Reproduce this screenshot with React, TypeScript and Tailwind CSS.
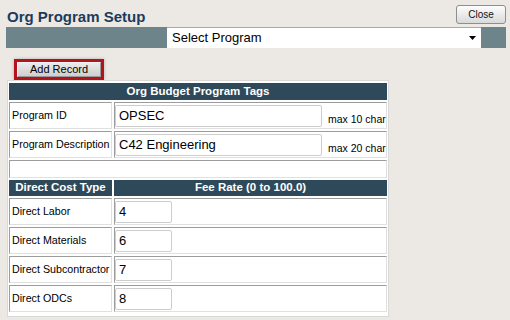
import React from 'react'

const inset =
  'border border-t-[#9c9c9c] border-l-[#9c9c9c] border-r-[#e0e0e0] border-b-[#e0e0e0]'

interface FieldProps {
  label: string
  value: string
  wide?: boolean
  hint?: string
}

function FieldRow({ label, value, wide, hint }: FieldProps) {
  return (
    <div className="flex h-[27px] gap-[2px]">
      <div className={`${inset} flex w-[103px] shrink-0 items-center whitespace-nowrap pl-[2px] text-[10.7px] text-black`}>
        {label}
      </div>
      <div className={`${inset} flex flex-1 items-center`}>
        <input
          readOnly
          value={value}
          className={`${wide ? 'w-[207px]' : 'w-[57px]'} h-[22px] rounded-[2px] border border-[#cdcdcd] bg-white px-[3px] text-[13px] text-black outline-none`}
        />
        {hint && <span className="ml-[6px] mt-[8px] whitespace-nowrap text-[10.5px] text-black">{hint}</span>}
      </div>
    </div>
  )
}

const costs = [
  { label: 'Direct Labor', value: '4' },
  { label: 'Direct Materials', value: '6' },
  { label: 'Direct Subcontractor', value: '7' },
  { label: 'Direct ODCs', value: '8' },
]

export default function App() {
  return (
    <div
      className="h-[320px] w-[510px] overflow-hidden bg-[#ece9e4]"
      style={{ fontFamily: '"Liberation Sans", Arial, sans-serif' }}
    >
      {/* title row */}
      <div className="flex h-[27px] items-start justify-between pl-[7px] pr-[4px]">
        <h1 className="pt-[8px] text-[15px] font-bold leading-[18px] text-[#1c3b5c]">Org Program Setup</h1>
        <button className="mt-[5px] h-[19px] w-[50px] rounded-[3px] border border-[#8e8e8e] bg-gradient-to-b from-[#fdfdfd] to-[#d9d9d9] text-[10px] text-[#111]">
          Close
        </button>
      </div>

      {/* program selector bar */}
      <div className="ml-[6px] mr-[4px] flex h-[21px] bg-[#6e848b]">
        <div className="ml-[161px] flex w-[314px] items-center justify-between border-t border-[#a8a8a8] bg-white pl-[5px] pr-[5px]">
          <span className="text-[13px] text-black">Select Program</span>
          <svg width="7" height="4" viewBox="0 0 7 4">
            <path d="M0 0h7L3.5 4z" fill="#000" />
          </svg>
        </div>
      </div>

      {/* add record */}
      <div className="ml-[14px] mt-[11px] w-[90px] border-[3px] border-[#b3141b] shadow-[0_0_3px_rgba(0,0,0,0.25)]">
        <button className="flex h-[15px] w-full items-center justify-center border border-t-[#f4f4f4] border-l-[#f4f4f4] border-r-[#9a9a9a] border-b-[#9a9a9a] bg-gradient-to-b from-[#ebebeb] to-[#cfcfcf] text-[11px] text-black">
          Add Record
        </button>
      </div>

      {/* panel */}
      <div className="ml-[7px] flex w-[382px] flex-col gap-[2px] border border-[#d9d9d9] bg-white px-[1px] pb-[4px] pt-[2px]">
        <div className="flex h-[17px] items-center justify-center bg-[#2e4a5a] text-[11.5px] font-bold text-white">
          Org Budget Program Tags
        </div>
        <FieldRow label="Program ID" value="OPSEC" wide hint="max 10 char" />
        <FieldRow label="Program Description" value="C42 Engineering" wide hint="max 20 char" />
        <div className={`${inset} h-[18px]`} />
        <div className="flex h-[16px] gap-[2px] text-[11.5px] font-bold text-white">
          <div className="flex w-[103px] shrink-0 items-center justify-center bg-[#2e4a5a]">Direct Cost Type</div>
          <div className="flex flex-1 items-center justify-center bg-[#2e4a5a]">Fee Rate (0 to 100.0)</div>
        </div>
        {costs.map((c) => (
          <FieldRow key={c.label} label={c.label} value={c.value} />
        ))}
      </div>
    </div>
  )
}
